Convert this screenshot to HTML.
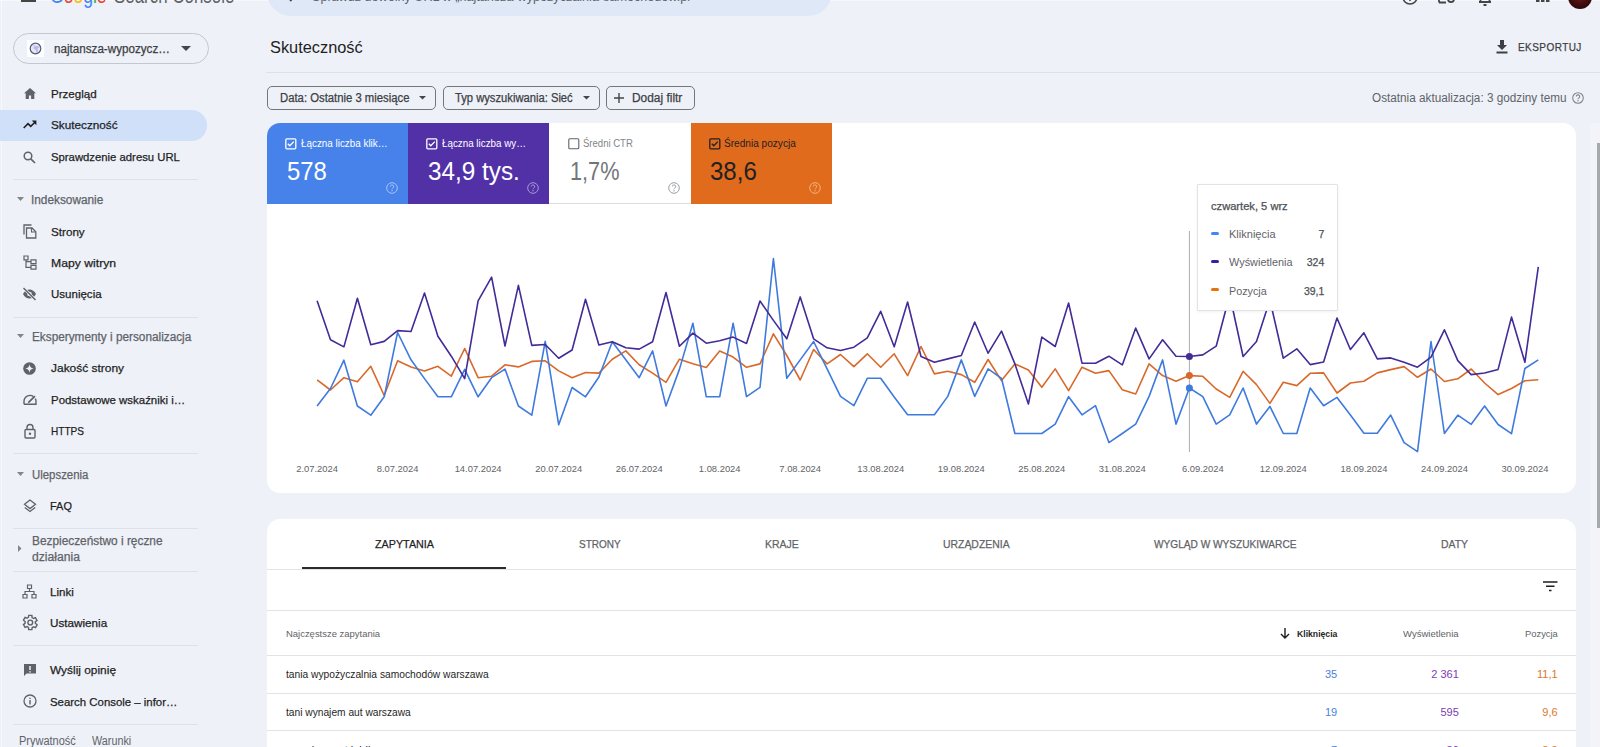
<!DOCTYPE html>
<html><head><meta charset="utf-8">
<style>
html,body{margin:0;padding:0;}
body{width:1600px;height:747px;overflow:hidden;position:relative;background:#eef1f8;font-family:"Liberation Sans",sans-serif;}
.abs{position:absolute;}
.tx{font-family:"Liberation Sans",sans-serif;}
.div{position:absolute;height:1px;background:#dde1e8;}
svg{position:absolute;overflow:visible;}
</style></head><body>
<!-- top bar -->
<div class="abs" style="left:0;top:0;width:1600px;height:1px;background:#f7f8fb"></div>
<div class="abs" style="left:1px;top:0;width:1px;height:747px;background:#f8f9fc"></div>
<div class="abs" style="left:21px;top:-6px;width:15px;height:6px;border-bottom:2px solid #444746;"></div>
<div class="abs" style="left:267px;top:-32px;width:565px;height:47.5px;border-radius:24px;background:#dfe8f7"></div>
<svg style="left:284px;top:-10px" width="14" height="14" viewBox="0 0 14 14"><path d="M11 7H3.5M7.5 3L3.5 7L7.5 11" stroke="#444746" stroke-width="1.8" fill="none"/></svg>
<svg style="left:1402px;top:-11px" width="16" height="16" viewBox="0 0 16 16"><circle cx="8" cy="8" r="7" stroke="#444746" stroke-width="1.6" fill="none"/><path d="M8 10.5v1.5" stroke="#444746" stroke-width="1.6"/></svg>
<svg style="left:1438px;top:-12px" width="18" height="16" viewBox="0 0 18 16"><path d="M1 14.5h7M1 8v6.5" stroke="#444746" stroke-width="1.8" fill="none"/><circle cx="13" cy="11" r="3" stroke="#444746" stroke-width="1.8" fill="none"/></svg>
<svg style="left:1478px;top:-11.3px" width="14" height="18" viewBox="0 0 14 18"><path d="M1 13h12M2.5 13V7a4.5 4.5 0 0 1 9 0v6" stroke="#444746" stroke-width="1.8" fill="none"/><rect x="5.5" y="15" width="3" height="2" fill="#444746"/></svg>
<svg style="left:1536px;top:-12px" width="14" height="15" viewBox="0 0 14 15"><g fill="#444746"><rect x="0" y="0" width="3.5" height="3.5"/><rect x="5" y="0" width="3.5" height="3.5"/><rect x="10" y="0" width="3.5" height="3.5"/><rect x="0" y="5" width="3.5" height="3.5"/><rect x="5" y="5" width="3.5" height="3.5"/><rect x="10" y="5" width="3.5" height="3.5"/><rect x="0" y="10.5" width="3.5" height="3.5"/><rect x="5" y="10.5" width="3.5" height="3.5"/><rect x="10" y="10.5" width="3.5" height="3.5"/></g></svg>
<div class="abs" style="left:1568px;top:-15px;width:24px;height:24px;border-radius:50%;background:radial-gradient(circle at 50% 40%,#7a1a1a 0,#3a0b0b 60%,#1a0606 100%)"></div>

<!-- sidebar -->
<div class="abs" style="left:13px;top:33px;width:194px;height:29px;border:1px solid #c4c7cc;border-radius:16px;"></div>
<div class="abs" style="left:27px;top:40px;width:17px;height:17px;background:#fff;"></div>
<svg style="left:29px;top:42px" width="13" height="13" viewBox="0 0 13 13"><circle cx="6.5" cy="6.5" r="5.4" fill="#e4e7f7"/><path d="M3.2 3.2C4.5 2.2 6 2.5 5.8 3.8S4 5 4.6 6.3 6.5 7 7 8.5 6.7 10.8 7.8 11.2C9 10 9.5 8.5 8.8 7.6S10.3 5.6 11 4.8" fill="#b9bde6"/><circle cx="6.5" cy="6.5" r="5.3" stroke="#565b78" stroke-width="1.2" fill="none"/></svg>
<svg style="left:181px;top:46px" width="10" height="6" viewBox="0 0 10 6"><path d="M0 0h10L5 5z" fill="#444746"/></svg>
<div class="abs" style="left:0;top:110px;width:207px;height:31px;border-radius:0 16px 16px 0;background:#d0e0f9"></div>
<!-- sidebar icons -->
<svg style="left:24px;top:88px" width="12" height="11" viewBox="0 0 12 11"><path d="M6 0L0 5.2h1.7V11h3.2V7.5h2.2V11h3.2V5.2H12z" fill="#5f6368"/></svg>
<svg style="left:23px;top:120px" width="14" height="9" viewBox="0 0 14 9"><path d="M0.7 8L5 3.7L7.7 6.4L12 2.2" stroke="#1f1f1f" stroke-width="1.6" fill="none"/><path d="M8.8 0.6h4.6v4.6z" fill="#1f1f1f"/></svg>
<svg style="left:23px;top:151px" width="13" height="13" viewBox="0 0 13 13"><circle cx="5" cy="5" r="3.8" stroke="#5f6368" stroke-width="1.5" fill="none"/><path d="M7.8 7.8L12 12" stroke="#5f6368" stroke-width="1.7"/></svg>
<div class="div" style="left:13px;top:179px;width:185px"></div>
<svg style="left:17px;top:197px" width="7" height="5" viewBox="0 0 7 5"><path d="M0 0h7L3.5 4z" fill="#80868b"/></svg>
<svg style="left:23px;top:224px" width="14" height="15" viewBox="0 0 14 15"><path d="M1 10.5V1h7.5" stroke="#5f6368" stroke-width="1.3" fill="none"/><path d="M3.5 4h5.5l3.8 3.8V14H3.5z" stroke="#5f6368" stroke-width="1.3" fill="none"/><path d="M8.5 4v4h4" stroke="#5f6368" stroke-width="1.1" fill="none"/></svg>
<svg style="left:23px;top:255px" width="14" height="15" viewBox="0 0 14 15"><path d="M1 1h4v3.8H1zM8 4.8h5v3.8H8zM8 10.4h5v3.8H8zM3 4.8v7.5h5M3 6.7h5" stroke="#5f6368" stroke-width="1.2" fill="none"/></svg>
<svg style="left:22px;top:287px" width="15" height="14" viewBox="0 0 15 14"><path d="M1 7C2.5 4 5 2.5 7.5 2.5S12.5 4 14 7C12.5 10 10 11.5 7.5 11.5S2.5 10 1 7z" fill="#5f6368"/><circle cx="7.5" cy="7" r="2.3" fill="#eef1f8"/><path d="M1.5 1l12 12" stroke="#eef1f8" stroke-width="2.6"/><path d="M1.5 1l12 12" stroke="#5f6368" stroke-width="1.4"/></svg>
<div class="div" style="left:13px;top:317px;width:185px"></div>
<svg style="left:17px;top:334px" width="7" height="5" viewBox="0 0 7 5"><path d="M0 0h7L3.5 4z" fill="#80868b"/></svg>
<svg style="left:23px;top:362px" width="13" height="13" viewBox="0 0 13 13"><circle cx="6.5" cy="6.5" r="6.3" fill="#5f6368"/><path d="M6.5 2.3C6.9 5 8 6.1 10.7 6.5C8 6.9 6.9 8 6.5 10.7C6.1 8 5 6.9 2.3 6.5C5 6.1 6.1 5 6.5 2.3z" fill="#eef1f8"/></svg>
<svg style="left:23px;top:394px" width="14" height="11" viewBox="0 0 14 11"><path d="M1 10.2V7.5A6 6 0 0 1 10.5 2.6M12.3 4.6A6 6 0 0 1 13 7.5V10.2H1" stroke="#5f6368" stroke-width="1.4" fill="none"/><path d="M5.8 8.2L11.5 2.6" stroke="#5f6368" stroke-width="1.7" stroke-linecap="round"/></svg>
<svg style="left:24px;top:423px" width="12" height="16" viewBox="0 0 12 16"><rect x="1" y="6.5" width="10" height="8.5" rx="1" stroke="#5f6368" stroke-width="1.4" fill="none"/><path d="M3 6.5V4.5a3 3 0 0 1 6 0v2" stroke="#5f6368" stroke-width="1.4" fill="none"/><circle cx="6" cy="10.8" r="1.2" fill="#5f6368"/></svg>
<div class="div" style="left:13px;top:453px;width:185px"></div>
<svg style="left:17px;top:472px" width="7" height="5" viewBox="0 0 7 5"><path d="M0 0h7L3.5 4z" fill="#80868b"/></svg>
<svg style="left:23px;top:499px" width="14" height="14" viewBox="0 0 14 14"><path d="M7 1L1.5 5.3L7 9.6L12.5 5.3z" stroke="#5f6368" stroke-width="1.3" fill="none"/><path d="M1.8 8.5L7 12.5L12.2 8.5" stroke="#5f6368" stroke-width="1.3" fill="none"/></svg>
<div class="div" style="left:13px;top:528px;width:185px"></div>
<svg style="left:18px;top:545px" width="4" height="7" viewBox="0 0 4 7"><path d="M0 0v7L3.5 3.5z" fill="#80868b"/></svg>
<div class="div" style="left:13px;top:571px;width:185px"></div>
<svg style="left:22px;top:584px" width="15" height="15" viewBox="0 0 15 15"><path d="M5.5 1h4v3.5h-4zM1 10.5h4v3.5H1zM10 10.5h4v3.5h-4zM7.5 4.5v3M3 10.5V7.5h9v3" stroke="#5f6368" stroke-width="1.2" fill="none"/></svg>
<svg style="left:20px;top:613px" width="19" height="19" viewBox="0 0 24 24"><path d="M19.4 13a7.5 7.5 0 0 0 0-2l2.1-1.6-2-3.5-2.5 1a7.3 7.3 0 0 0-1.7-1L15 3h-4l-.4 2.6a7.3 7.3 0 0 0-1.7 1l-2.5-1-2 3.5L6.5 11a7.5 7.5 0 0 0 0 2l-2.1 1.6 2 3.5 2.5-1c.5.4 1.1.8 1.7 1L11 21h4l.4-2.6c.6-.3 1.2-.6 1.7-1l2.5 1 2-3.5z" stroke="#5f6368" stroke-width="1.8" fill="none"/><circle cx="13" cy="12" r="3" stroke="#5f6368" stroke-width="1.8" fill="none"/></svg>
<div class="div" style="left:13px;top:645px;width:185px"></div>
<svg style="left:23px;top:663px" width="14" height="14" viewBox="0 0 14 14"><path d="M1 1h12v9.5H3.5L1 13z" fill="#5f6368"/><path d="M7 3v4M7 8.2v1.3" stroke="#eef1f8" stroke-width="1.5"/></svg>
<svg style="left:23px;top:694px" width="14" height="14" viewBox="0 0 14 14"><circle cx="7" cy="7" r="6" stroke="#5f6368" stroke-width="1.3" fill="none"/><path d="M7 6v4.5M7 3.8v1.2" stroke="#5f6368" stroke-width="1.4"/></svg>
<div class="div" style="left:13px;top:724px;width:185px"></div>

<!-- main header -->
<div class="div" style="left:266px;top:72px;width:1334px"></div>
<svg style="left:1496px;top:40px" width="12" height="14" viewBox="0 0 12 14"><path d="M4 0h4v5h3L6 10L1 5h3z" fill="#3c4043"/><rect x="0.5" y="11.5" width="11" height="2" fill="#3c4043"/></svg>
<!-- chips -->
<div class="abs" style="left:267px;top:86px;width:167px;height:22px;border:1px solid #747775;border-radius:5px"></div>
<svg style="left:419px;top:96px" width="7" height="4" viewBox="0 0 7 4"><path d="M0 0h7L3.5 3.5z" fill="#444746"/></svg>
<div class="abs" style="left:443px;top:86px;width:155px;height:22px;border:1px solid #747775;border-radius:5px"></div>
<svg style="left:583px;top:96px" width="7" height="4" viewBox="0 0 7 4"><path d="M0 0h7L3.5 3.5z" fill="#444746"/></svg>
<div class="abs" style="left:606px;top:86px;width:87px;height:22px;border:1px solid #747775;border-radius:5px"></div>
<svg style="left:614px;top:93px" width="10" height="10" viewBox="0 0 10 10"><path d="M5 0v10M0 5h10" stroke="#444746" stroke-width="1.4"/></svg>
<svg style="left:1572px;top:92px" width="12" height="12" viewBox="0 0 12 12"><circle cx="6" cy="6" r="5.3" stroke="#80868b" stroke-width="1.1" fill="none"/><path d="M4.3 4.6a1.7 1.7 0 1 1 2.4 1.5c-.5.3-.7.6-.7 1.2" stroke="#80868b" stroke-width="1.1" fill="none"/><circle cx="6" cy="8.8" r=".7" fill="#80868b"/></svg>

<!-- chart card -->
<div class="abs" style="left:267px;top:123px;width:1309px;height:370px;background:#fff;border-radius:13px"></div>
<div class="abs" style="left:267px;top:123px;width:141.2px;height:81px;background:#4682ea;border-radius:13px 0 0 0"></div>
<div class="abs" style="left:408.2px;top:123px;width:141.2px;height:81px;background:#5231a7"></div>
<div class="abs" style="left:549.4px;top:123px;width:141.2px;height:80px;background:#fff;border-bottom:1px solid #dadce0"></div>
<div class="abs" style="left:690.6px;top:123px;width:141.2px;height:81px;background:#e06b1c"></div>
<!-- checkboxes -->
<svg style="left:285px;top:138px" width="12" height="12" viewBox="0 0 12 12"><rect x="0.8" y="0.8" width="10" height="10" rx="1" stroke="#fff" stroke-width="1.3" fill="none"/><path d="M2.8 5.8l2 2 4-4.2" stroke="#fff" stroke-width="1.3" fill="none"/></svg>
<svg style="left:426px;top:138px" width="12" height="12" viewBox="0 0 12 12"><rect x="0.8" y="0.8" width="10" height="10" rx="1" stroke="#fff" stroke-width="1.3" fill="none"/><path d="M2.8 5.8l2 2 4-4.2" stroke="#fff" stroke-width="1.3" fill="none"/></svg>
<svg style="left:568px;top:138px" width="12" height="12" viewBox="0 0 12 12"><rect x="0.8" y="0.8" width="10" height="10" rx="1" stroke="#5f6368" stroke-width="1.1" fill="none"/></svg>
<svg style="left:709px;top:138px" width="12" height="12" viewBox="0 0 12 12"><rect x="0.8" y="0.8" width="10" height="10" rx="1" stroke="#202124" stroke-width="1.3" fill="none"/><path d="M2.8 5.8l2 2 4-4.2" stroke="#202124" stroke-width="1.3" fill="none"/></svg>
<!-- help icons in tiles -->
<svg style="left:386px;top:182px" width="12" height="12" viewBox="0 0 12 12"><g stroke="#a8c4f8" stroke-width="1" fill="none"><circle cx="6" cy="6" r="5.3"/><path d="M4.3 4.6a1.7 1.7 0 1 1 2.4 1.5c-.5.3-.7.6-.7 1.2"/></g><circle cx="6" cy="8.8" r=".7" fill="#a8c4f8"/></svg>
<svg style="left:527px;top:182px" width="12" height="12" viewBox="0 0 12 12"><g stroke="#a898d4" stroke-width="1" fill="none"><circle cx="6" cy="6" r="5.3"/><path d="M4.3 4.6a1.7 1.7 0 1 1 2.4 1.5c-.5.3-.7.6-.7 1.2"/></g><circle cx="6" cy="8.8" r=".7" fill="#a898d4"/></svg>
<svg style="left:668px;top:182px" width="12" height="12" viewBox="0 0 12 12"><g stroke="#9aa0a6" stroke-width="1" fill="none"><circle cx="6" cy="6" r="5.3"/><path d="M4.3 4.6a1.7 1.7 0 1 1 2.4 1.5c-.5.3-.7.6-.7 1.2"/></g><circle cx="6" cy="8.8" r=".7" fill="#9aa0a6"/></svg>
<svg style="left:809px;top:182px" width="12" height="12" viewBox="0 0 12 12"><g stroke="#f5b47a" stroke-width="1" fill="none"><circle cx="6" cy="6" r="5.3"/><path d="M4.3 4.6a1.7 1.7 0 1 1 2.4 1.5c-.5.3-.7.6-.7 1.2"/></g><circle cx="6" cy="8.8" r=".7" fill="#f5b47a"/></svg>
<!-- chart lines -->
<svg style="left:0;top:0" width="1600" height="747" viewBox="0 0 1600 747">
<line x1="1189.4" y1="231" x2="1189.4" y2="452" stroke="#a9adb2" stroke-width="1"/>
<polyline points="317.1,379.8 330.5,390.0 343.9,377.7 357.4,381.7 370.8,366.3 384.2,395.5 397.6,360.8 411.0,366.9 424.5,370.9 437.9,366.3 451.3,376.2 464.7,348.5 478.1,377.7 491.6,376.2 505.0,364.8 518.4,366.9 531.8,361.4 545.2,360.8 558.7,370.9 572.1,377.7 585.5,372.5 598.9,373.1 612.3,359.2 625.8,350.9 639.2,364.8 652.6,373.1 666.0,382.3 679.4,359.2 692.9,363.8 706.3,367.5 719.7,350.9 733.1,357.1 746.5,367.3 760.0,363.9 773.4,333.8 786.8,355.5 800.2,380.0 813.6,349.5 827.1,363.9 840.5,354.5 853.9,366.6 867.3,353.8 880.7,367.2 894.2,353.8 907.6,375.6 921.0,346.5 934.4,373.9 947.8,371.3 961.3,374.6 974.7,382.3 988.1,359.5 1001.5,380.6 1014.9,363.9 1028.4,369.9 1041.8,387.3 1055.2,368.9 1068.6,390.7 1082.0,367.2 1095.5,373.3 1108.9,370.6 1122.3,389.7 1135.7,394.0 1149.1,363.9 1162.6,375.6 1176.0,381.3 1189.4,375.6 1202.8,376.3 1216.2,389.0 1229.7,397.4 1243.1,371.3 1256.5,384.6 1269.9,403.4 1283.3,382.3 1296.8,385.6 1310.2,373.3 1323.6,372.9 1337.0,393.0 1350.4,383.0 1363.9,381.3 1377.3,372.9 1390.7,369.6 1404.1,366.6 1417.5,377.3 1431.0,369.0 1444.4,381.5 1457.8,378.8 1471.2,369.0 1484.6,383.0 1498.1,394.6 1511.5,388.5 1524.9,380.8 1538.3,379.8" fill="none" stroke="#d8692a" stroke-width="1.6" stroke-linejoin="round"/>
<polyline points="317.1,406.0 330.5,388.5 343.9,360.2 357.4,406.0 370.8,415.2 384.2,396.8 397.6,332.5 411.0,359.8 424.5,378.6 437.9,396.8 451.3,396.8 464.7,369.4 478.1,396.8 491.6,377.7 505.0,369.1 518.4,406.0 531.8,415.2 545.2,341.4 558.7,424.8 572.1,387.5 585.5,396.8 598.9,377.0 612.3,341.7 625.8,359.8 639.2,377.7 652.6,350.9 666.0,406.0 679.4,369.4 692.9,323.2 706.3,396.8 719.7,396.8 733.1,323.2 746.5,396.6 760.0,387.3 773.4,258.5 786.8,378.3 800.2,359.9 813.6,341.5 827.1,368.9 840.5,396.4 853.9,405.7 867.3,378.3 880.7,378.3 894.2,397.0 907.6,414.8 921.0,414.8 934.4,414.8 947.8,396.4 961.3,359.9 974.7,396.4 988.1,368.9 1001.5,378.3 1014.9,433.5 1028.4,433.5 1041.8,433.5 1055.2,424.1 1068.6,396.7 1082.0,414.8 1095.5,405.7 1108.9,442.6 1122.3,433.5 1135.7,424.1 1149.1,396.4 1162.6,359.9 1176.0,424.1 1189.4,388.0 1202.8,396.7 1216.2,424.1 1229.7,414.8 1243.1,388.0 1256.5,424.1 1269.9,406.4 1283.3,433.5 1296.8,433.5 1310.2,388.0 1323.6,405.7 1337.0,397.4 1350.4,415.1 1363.9,433.2 1377.3,433.2 1390.7,415.1 1404.1,442.6 1417.5,451.6 1431.0,341.5 1444.4,433.5 1457.8,415.2 1471.2,424.3 1484.6,406.0 1498.1,424.5 1511.5,433.7 1524.9,368.5 1538.3,359.8" fill="none" stroke="#3f7ade" stroke-width="1.6" stroke-linejoin="round"/>
<polyline points="317.1,300.8 330.5,339.8 343.9,346.9 357.4,298.3 370.8,344.8 384.2,341.4 397.6,330.6 411.0,331.5 424.5,293.1 437.9,336.2 451.3,356.2 464.7,378.6 478.1,300.8 491.6,277.1 505.0,346.0 518.4,285.4 531.8,345.4 545.2,344.5 558.7,358.3 572.1,350.0 585.5,299.2 598.9,345.0 612.3,341.7 625.8,347.8 639.2,349.1 652.6,341.7 666.0,292.5 679.4,346.3 692.9,333.1 706.3,343.2 719.7,340.8 733.1,337.1 746.5,343.5 760.0,301.0 773.4,320.4 786.8,338.8 800.2,296.9 813.6,338.8 827.1,347.8 840.5,350.5 853.9,347.2 867.3,337.8 880.7,311.3 894.2,346.8 907.6,302.0 921.0,356.5 934.4,362.2 947.8,358.9 961.3,355.5 974.7,322.0 988.1,353.2 1001.5,331.1 1014.9,363.9 1028.4,404.0 1041.8,337.1 1055.2,346.5 1068.6,303.0 1082.0,363.2 1095.5,363.2 1108.9,356.2 1122.3,364.9 1135.7,328.1 1149.1,358.9 1162.6,339.8 1176.0,356.2 1189.4,356.5 1202.8,354.9 1216.2,346.2 1229.7,295.0 1243.1,356.5 1256.5,341.5 1269.9,300.0 1283.3,358.2 1296.8,348.8 1310.2,364.6 1323.6,362.0 1337.0,318.0 1350.4,349.5 1363.9,332.8 1377.3,358.9 1390.7,357.9 1404.1,362.2 1417.5,367.2 1431.0,357.2 1444.4,329.8 1457.8,360.6 1471.2,374.6 1484.6,373.0 1498.1,369.4 1511.5,317.1 1524.9,362.3 1538.3,266.9" fill="none" stroke="#432b98" stroke-width="1.6" stroke-linejoin="round"/>
<circle cx="1189.4" cy="356.5" r="3.5" fill="#432b98"/>
<circle cx="1189.4" cy="375.6" r="3.5" fill="#d8692a"/>
<circle cx="1189.4" cy="388" r="3.5" fill="#3f7ade"/>
</svg>
<!-- tooltip -->
<div class="abs" style="left:1197px;top:184px;width:139px;height:125px;background:#fff;border:1px solid #e2e3e5;border-radius:1px;box-shadow:0 1px 3px rgba(0,0,0,0.06)"></div>
<div class="abs" style="left:1211px;top:232px;width:8px;height:3px;border-radius:1.5px;background:#4285f4"></div>
<div class="abs" style="left:1211px;top:260px;width:8px;height:3px;border-radius:1.5px;background:#3c1f9c"></div>
<div class="abs" style="left:1211px;top:288px;width:8px;height:3px;border-radius:1.5px;background:#e8710a"></div>

<!-- table card -->
<div class="abs" style="left:267px;top:519px;width:1309px;height:260px;background:#fff;border-radius:13px"></div>
<div class="abs" style="left:302px;top:567px;width:204px;height:2px;background:#2a2b2e"></div>
<div class="div" style="left:267px;top:569px;width:1309px;background:#e3e3e3"></div>
<svg style="left:1543px;top:581px" width="15" height="11" viewBox="0 0 15 11"><path d="M0 1h14.5M3 5.2h8.5M6 9.5h2.5" stroke="#1f1f1f" stroke-width="1.6"/></svg>
<div class="div" style="left:267px;top:610px;width:1309px;background:#e3e3e3"></div>
<svg style="left:1280px;top:628px" width="10" height="11" viewBox="0 0 10 11"><path d="M5 0v10M1 6l4 4 4-4" stroke="#1f1f1f" stroke-width="1.4" fill="none"/></svg>
<div class="div" style="left:267px;top:655px;width:1309px;background:#e3e3e3"></div>
<div class="div" style="left:267px;top:693px;width:1309px;background:#e3e3e3"></div>
<div class="div" style="left:267px;top:730px;width:1309px;background:#e3e3e3"></div>
<!-- scrollbar -->
<div class="abs" style="left:1590px;top:123px;width:10px;height:624px;background:#f2f4f9"></div>
<div class="abs" style="left:1597px;top:143px;width:3px;height:385px;background:#a6a9ad"></div>
<div id="logo1" class="tx" style="position:absolute;top:-13.6px;height:20px;line-height:20px;font-size:22px;font-weight:400;color:#4285f4;white-space:nowrap;left:50.4px;transform-origin:0 50%;transform:scaleX(0.7970);"><span style="color:#4285f4">G</span><span style="color:#ea4335">o</span><span style="color:#fbbc04">o</span><span style="color:#4285f4">g</span><span style="color:#34a853">l</span><span style="color:#ea4335">e</span></div>
<div id="logo2" class="tx" style="position:absolute;top:-13.6px;height:20px;line-height:20px;font-size:22px;font-weight:400;color:#5f6368;white-space:nowrap;left:113.7px;transform-origin:0 50%;transform:scaleX(0.7685);">Search Console</div>
<div id="search" class="tx" style="position:absolute;top:-12.6px;height:20px;line-height:20px;font-size:13.5px;font-weight:400;color:#5f6368;white-space:nowrap;left:312.0px;transform-origin:0 50%;transform:scaleX(0.9341);">Sprawdź dowolny URL w „najtansza-wypozyczalnia-samochodow.pl</div>
<div id="s_prop" class="tx" style="position:absolute;top:39.0px;height:20px;line-height:20px;font-size:12px;font-weight:500;color:#3c4043;white-space:nowrap;-webkit-text-stroke:0.25px #3c4043;left:54.3px;transform-origin:0 50%;transform:scaleX(0.9708);">najtansza-wypozycz…</div>
<div id="s1" class="tx" style="position:absolute;top:84.0px;height:20px;line-height:20px;font-size:11.5px;font-weight:500;color:#1f1f1f;white-space:nowrap;-webkit-text-stroke:0.25px #1f1f1f;left:50.6px;transform-origin:0 50%;transform:scaleX(1.0068);">Przegląd</div>
<div id="s2" class="tx" style="position:absolute;top:115.3px;height:20px;line-height:20px;font-size:11.5px;font-weight:500;color:#1f1f1f;white-space:nowrap;-webkit-text-stroke:0.25px #1f1f1f;left:50.6px;transform-origin:0 50%;transform:scaleX(1.0214);">Skuteczność</div>
<div id="s3" class="tx" style="position:absolute;top:147.3px;height:20px;line-height:20px;font-size:11.5px;font-weight:500;color:#1f1f1f;white-space:nowrap;-webkit-text-stroke:0.25px #1f1f1f;left:50.6px;transform-origin:0 50%;transform:scaleX(0.9836);">Sprawdzenie adresu URL</div>
<div id="s5" class="tx" style="position:absolute;top:221.6px;height:20px;line-height:20px;font-size:11.5px;font-weight:500;color:#1f1f1f;white-space:nowrap;-webkit-text-stroke:0.25px #1f1f1f;left:50.6px;transform-origin:0 50%;transform:scaleX(1.0135);">Strony</div>
<div id="s6" class="tx" style="position:absolute;top:252.9px;height:20px;line-height:20px;font-size:11.5px;font-weight:500;color:#1f1f1f;white-space:nowrap;-webkit-text-stroke:0.25px #1f1f1f;left:50.6px;transform-origin:0 50%;transform:scaleX(1.0610);">Mapy witryn</div>
<div id="s7" class="tx" style="position:absolute;top:284.2px;height:20px;line-height:20px;font-size:11.5px;font-weight:500;color:#1f1f1f;white-space:nowrap;-webkit-text-stroke:0.25px #1f1f1f;left:50.6px;transform-origin:0 50%;transform:scaleX(1.0020);">Usunięcia</div>
<div id="s9" class="tx" style="position:absolute;top:358.2px;height:20px;line-height:20px;font-size:11.5px;font-weight:500;color:#1f1f1f;white-space:nowrap;-webkit-text-stroke:0.25px #1f1f1f;left:50.6px;transform-origin:0 50%;transform:scaleX(1.0396);">Jakość strony</div>
<div id="s10" class="tx" style="position:absolute;top:390.0px;height:20px;line-height:20px;font-size:11.5px;font-weight:500;color:#1f1f1f;white-space:nowrap;-webkit-text-stroke:0.25px #1f1f1f;left:50.6px;transform-origin:0 50%;transform:scaleX(0.9951);">Podstawowe wskaźniki i…</div>
<div id="s11" class="tx" style="position:absolute;top:421.1px;height:20px;line-height:20px;font-size:11.5px;font-weight:500;color:#1f1f1f;white-space:nowrap;-webkit-text-stroke:0.25px #1f1f1f;left:50.6px;transform-origin:0 50%;transform:scaleX(0.8753);">HTTPS</div>
<div id="s13" class="tx" style="position:absolute;top:496.0px;height:20px;line-height:20px;font-size:11.5px;font-weight:500;color:#1f1f1f;white-space:nowrap;-webkit-text-stroke:0.25px #1f1f1f;left:50.3px;transform-origin:0 50%;transform:scaleX(0.9515);">FAQ</div>
<div id="s17" class="tx" style="position:absolute;top:581.7px;height:20px;line-height:20px;font-size:11.5px;font-weight:500;color:#1f1f1f;white-space:nowrap;-webkit-text-stroke:0.25px #1f1f1f;left:50.3px;transform-origin:0 50%;transform:scaleX(1.0061);">Linki</div>
<div id="s18" class="tx" style="position:absolute;top:613.1px;height:20px;line-height:20px;font-size:11.5px;font-weight:500;color:#1f1f1f;white-space:nowrap;-webkit-text-stroke:0.25px #1f1f1f;left:50.3px;transform-origin:0 50%;transform:scaleX(1.0169);">Ustawienia</div>
<div id="s19" class="tx" style="position:absolute;top:660.4px;height:20px;line-height:20px;font-size:11.5px;font-weight:500;color:#1f1f1f;white-space:nowrap;-webkit-text-stroke:0.25px #1f1f1f;left:50.3px;transform-origin:0 50%;transform:scaleX(1.0343);">Wyślij opinię</div>
<div id="s20" class="tx" style="position:absolute;top:691.8px;height:20px;line-height:20px;font-size:11.5px;font-weight:500;color:#1f1f1f;white-space:nowrap;-webkit-text-stroke:0.25px #1f1f1f;left:50.3px;transform-origin:0 50%;transform:scaleX(0.9916);">Search Console – infor…</div>
<div id="s4" class="tx" style="position:absolute;top:190.0px;height:20px;line-height:20px;font-size:12px;font-weight:500;color:#5f6368;white-space:nowrap;-webkit-text-stroke:0.25px #5f6368;left:31.3px;transform-origin:0 50%;transform:scaleX(0.9851);">Indeksowanie</div>
<div id="s8" class="tx" style="position:absolute;top:326.7px;height:20px;line-height:20px;font-size:12px;font-weight:500;color:#5f6368;white-space:nowrap;-webkit-text-stroke:0.25px #5f6368;left:31.9px;transform-origin:0 50%;transform:scaleX(0.9829);">Eksperymenty i personalizacja</div>
<div id="s12" class="tx" style="position:absolute;top:464.6px;height:20px;line-height:20px;font-size:12px;font-weight:500;color:#5f6368;white-space:nowrap;-webkit-text-stroke:0.25px #5f6368;left:31.9px;transform-origin:0 50%;transform:scaleX(0.9499);">Ulepszenia</div>
<div id="s15" class="tx" style="position:absolute;top:531.4px;height:20px;line-height:20px;font-size:12px;font-weight:500;color:#5f6368;white-space:nowrap;-webkit-text-stroke:0.25px #5f6368;left:31.9px;transform-origin:0 50%;transform:scaleX(0.9881);">Bezpieczeństwo i ręczne</div>
<div id="s16" class="tx" style="position:absolute;top:546.7px;height:20px;line-height:20px;font-size:12px;font-weight:500;color:#5f6368;white-space:nowrap;-webkit-text-stroke:0.25px #5f6368;left:31.9px;transform-origin:0 50%;transform:scaleX(1.0111);">działania</div>
<div id="s21" class="tx" style="position:absolute;top:731.4px;height:20px;line-height:20px;font-size:12px;font-weight:400;color:#5f6368;white-space:nowrap;left:19.2px;transform-origin:0 50%;transform:scaleX(0.9157);">Prywatność</div>
<div id="s22" class="tx" style="position:absolute;top:731.4px;height:20px;line-height:20px;font-size:12px;font-weight:400;color:#5f6368;white-space:nowrap;left:92.1px;transform-origin:0 50%;transform:scaleX(0.8995);">Warunki</div>
<div id="m_title" class="tx" style="position:absolute;top:38.1px;height:20px;line-height:20px;font-size:16px;font-weight:400;color:#1f1f1f;white-space:nowrap;left:270.0px;transform-origin:0 50%;transform:scaleX(1.0218);">Skuteczność</div>
<div id="m_exp" class="tx" style="position:absolute;top:36.9px;height:20px;line-height:20px;font-size:11.5px;font-weight:500;color:#3c4043;white-space:nowrap;letter-spacing:0.5px;-webkit-text-stroke:0.25px #3c4043;left:1517.7px;transform-origin:0 50%;transform:scaleX(0.8702);">EKSPORTUJ</div>
<div id="c1" class="tx" style="position:absolute;top:88.0px;height:20px;line-height:20px;font-size:12px;font-weight:500;color:#3c4043;white-space:nowrap;-webkit-text-stroke:0.25px #3c4043;left:279.6px;transform-origin:0 50%;transform:scaleX(0.9425);">Data: Ostatnie 3 miesiące</div>
<div id="c2" class="tx" style="position:absolute;top:88.0px;height:20px;line-height:20px;font-size:12px;font-weight:500;color:#3c4043;white-space:nowrap;-webkit-text-stroke:0.25px #3c4043;left:455.0px;transform-origin:0 50%;transform:scaleX(0.9338);">Typ wyszukiwania: Sieć</div>
<div id="c3" class="tx" style="position:absolute;top:88.0px;height:20px;line-height:20px;font-size:12px;font-weight:500;color:#3c4043;white-space:nowrap;-webkit-text-stroke:0.25px #3c4043;left:632.2px;transform-origin:0 50%;transform:scaleX(0.9924);">Dodaj filtr</div>
<div id="upd" class="tx" style="position:absolute;top:88.0px;height:20px;line-height:20px;font-size:12px;font-weight:400;color:#5f6368;white-space:nowrap;left:1372.4px;transform-origin:0 50%;transform:scaleX(0.9790);">Ostatnia aktualizacja: 3 godziny temu</div>
<div id="tl1" class="tx" style="position:absolute;top:133.5px;height:20px;line-height:20px;font-size:10px;font-weight:400;color:#ffffff;white-space:nowrap;left:300.6px;transform-origin:0 50%;transform:scaleX(0.9862);">Łączna liczba klik…</div>
<div id="tl2" class="tx" style="position:absolute;top:133.5px;height:20px;line-height:20px;font-size:10px;font-weight:400;color:#ffffff;white-space:nowrap;left:441.9px;transform-origin:0 50%;transform:scaleX(0.9814);">Łączna liczba wy…</div>
<div id="tl3" class="tx" style="position:absolute;top:133.5px;height:20px;line-height:20px;font-size:10px;font-weight:400;color:#80868b;white-space:nowrap;left:583.2px;transform-origin:0 50%;transform:scaleX(0.9531);">Średni CTR</div>
<div id="tl4" class="tx" style="position:absolute;top:133.5px;height:20px;line-height:20px;font-size:10px;font-weight:400;color:#202124;white-space:nowrap;left:724.0px;transform-origin:0 50%;transform:scaleX(1.0090);">Średnia pozycja</div>
<div id="tv1" class="tx" style="position:absolute;top:160.6px;height:20px;line-height:20px;font-size:25px;font-weight:400;color:#ffffff;white-space:nowrap;left:287.0px;transform-origin:0 50%;transform:scaleX(0.9564);">578</div>
<div id="tv2" class="tx" style="position:absolute;top:160.6px;height:20px;line-height:20px;font-size:25px;font-weight:400;color:#ffffff;white-space:nowrap;left:427.5px;transform-origin:0 50%;transform:scaleX(0.9714);">34,9 tys.</div>
<div id="tv3" class="tx" style="position:absolute;top:160.6px;height:20px;line-height:20px;font-size:25px;font-weight:400;color:#70757a;white-space:nowrap;left:569.6px;transform-origin:0 50%;transform:scaleX(0.8669);">1,7%</div>
<div id="tv4" class="tx" style="position:absolute;top:160.6px;height:20px;line-height:20px;font-size:25px;font-weight:400;color:#202124;white-space:nowrap;left:709.6px;transform-origin:0 50%;transform:scaleX(0.9615);">38,6</div>
<div id="d0" class="tx" style="position:absolute;top:458.8px;height:20px;line-height:20px;font-size:9.4px;font-weight:400;color:#5f6368;white-space:nowrap;left:317.1px;transform:translateX(-50%);">2.07.2024</div>
<div id="d1" class="tx" style="position:absolute;top:458.8px;height:20px;line-height:20px;font-size:9.4px;font-weight:400;color:#5f6368;white-space:nowrap;left:397.6px;transform:translateX(-50%);">8.07.2024</div>
<div id="d2" class="tx" style="position:absolute;top:458.8px;height:20px;line-height:20px;font-size:9.4px;font-weight:400;color:#5f6368;white-space:nowrap;left:478.1px;transform:translateX(-50%);">14.07.2024</div>
<div id="d3" class="tx" style="position:absolute;top:458.8px;height:20px;line-height:20px;font-size:9.4px;font-weight:400;color:#5f6368;white-space:nowrap;left:558.7px;transform:translateX(-50%);">20.07.2024</div>
<div id="d4" class="tx" style="position:absolute;top:458.8px;height:20px;line-height:20px;font-size:9.4px;font-weight:400;color:#5f6368;white-space:nowrap;left:639.2px;transform:translateX(-50%);">26.07.2024</div>
<div id="d5" class="tx" style="position:absolute;top:458.8px;height:20px;line-height:20px;font-size:9.4px;font-weight:400;color:#5f6368;white-space:nowrap;left:719.7px;transform:translateX(-50%);">1.08.2024</div>
<div id="d6" class="tx" style="position:absolute;top:458.8px;height:20px;line-height:20px;font-size:9.4px;font-weight:400;color:#5f6368;white-space:nowrap;left:800.2px;transform:translateX(-50%);">7.08.2024</div>
<div id="d7" class="tx" style="position:absolute;top:458.8px;height:20px;line-height:20px;font-size:9.4px;font-weight:400;color:#5f6368;white-space:nowrap;left:880.7px;transform:translateX(-50%);">13.08.2024</div>
<div id="d8" class="tx" style="position:absolute;top:458.8px;height:20px;line-height:20px;font-size:9.4px;font-weight:400;color:#5f6368;white-space:nowrap;left:961.3px;transform:translateX(-50%);">19.08.2024</div>
<div id="d9" class="tx" style="position:absolute;top:458.8px;height:20px;line-height:20px;font-size:9.4px;font-weight:400;color:#5f6368;white-space:nowrap;left:1041.8px;transform:translateX(-50%);">25.08.2024</div>
<div id="d10" class="tx" style="position:absolute;top:458.8px;height:20px;line-height:20px;font-size:9.4px;font-weight:400;color:#5f6368;white-space:nowrap;left:1122.3px;transform:translateX(-50%);">31.08.2024</div>
<div id="d11" class="tx" style="position:absolute;top:458.8px;height:20px;line-height:20px;font-size:9.4px;font-weight:400;color:#5f6368;white-space:nowrap;left:1202.8px;transform:translateX(-50%);">6.09.2024</div>
<div id="d12" class="tx" style="position:absolute;top:458.8px;height:20px;line-height:20px;font-size:9.4px;font-weight:400;color:#5f6368;white-space:nowrap;left:1283.3px;transform:translateX(-50%);">12.09.2024</div>
<div id="d13" class="tx" style="position:absolute;top:458.8px;height:20px;line-height:20px;font-size:9.4px;font-weight:400;color:#5f6368;white-space:nowrap;left:1363.9px;transform:translateX(-50%);">18.09.2024</div>
<div id="d14" class="tx" style="position:absolute;top:458.8px;height:20px;line-height:20px;font-size:9.4px;font-weight:400;color:#5f6368;white-space:nowrap;left:1444.4px;transform:translateX(-50%);">24.09.2024</div>
<div id="d15" class="tx" style="position:absolute;top:458.8px;height:20px;line-height:20px;font-size:9.4px;font-weight:400;color:#5f6368;white-space:nowrap;left:1524.9px;transform:translateX(-50%);">30.09.2024</div>
<div id="tt_h" class="tx" style="position:absolute;top:196.1px;height:20px;line-height:20px;font-size:10.5px;font-weight:500;color:#4d5156;white-space:nowrap;-webkit-text-stroke:0.25px #4d5156;left:1211.2px;transform-origin:0 50%;transform:scaleX(1.0600);">czwartek, 5 wrz</div>
<div id="tt_l1" class="tx" style="position:absolute;top:223.9px;height:20px;line-height:20px;font-size:10.5px;font-weight:400;color:#5f6368;white-space:nowrap;left:1229.3px;transform-origin:0 50%;transform:scaleX(1.0505);">Kliknięcia</div>
<div id="tt_l2" class="tx" style="position:absolute;top:251.6px;height:20px;line-height:20px;font-size:10.5px;font-weight:400;color:#5f6368;white-space:nowrap;left:1229.3px;transform-origin:0 50%;transform:scaleX(1.0394);">Wyświetlenia</div>
<div id="tt_l3" class="tx" style="position:absolute;top:280.5px;height:20px;line-height:20px;font-size:10.5px;font-weight:400;color:#5f6368;white-space:nowrap;left:1229.3px;transform-origin:0 50%;transform:scaleX(1.0254);">Pozycja</div>
<div id="tt_v1" class="tx" style="position:absolute;top:223.9px;height:20px;line-height:20px;font-size:10.5px;font-weight:500;color:#4d5156;white-space:nowrap;-webkit-text-stroke:0.25px #4d5156;right:275.7px;transform-origin:100% 50%;">7</div>
<div id="tt_v2" class="tx" style="position:absolute;top:251.6px;height:20px;line-height:20px;font-size:10.5px;font-weight:500;color:#4d5156;white-space:nowrap;-webkit-text-stroke:0.25px #4d5156;right:275.7px;transform-origin:100% 50%;">324</div>
<div id="tt_v3" class="tx" style="position:absolute;top:280.5px;height:20px;line-height:20px;font-size:10.5px;font-weight:500;color:#4d5156;white-space:nowrap;-webkit-text-stroke:0.25px #4d5156;right:275.7px;transform-origin:100% 50%;">39,1</div>
<div id="tb1" class="tx" style="position:absolute;top:534.0px;height:20px;line-height:20px;font-size:11px;font-weight:500;color:#1f1f1f;white-space:nowrap;-webkit-text-stroke:0.25px #1f1f1f;left:374.8px;transform-origin:0 50%;transform:scaleX(0.9782);">ZAPYTANIA</div>
<div id="tb2" class="tx" style="position:absolute;top:534.0px;height:20px;line-height:20px;font-size:11px;font-weight:500;color:#5f6368;white-space:nowrap;-webkit-text-stroke:0.25px #5f6368;left:579.0px;transform-origin:0 50%;transform:scaleX(0.9074);">STRONY</div>
<div id="tb3" class="tx" style="position:absolute;top:534.0px;height:20px;line-height:20px;font-size:11px;font-weight:500;color:#5f6368;white-space:nowrap;-webkit-text-stroke:0.25px #5f6368;left:765.2px;transform-origin:0 50%;transform:scaleX(0.9530);">KRAJE</div>
<div id="tb4" class="tx" style="position:absolute;top:534.0px;height:20px;line-height:20px;font-size:11px;font-weight:500;color:#5f6368;white-space:nowrap;-webkit-text-stroke:0.25px #5f6368;left:943.0px;transform-origin:0 50%;transform:scaleX(0.9476);">URZĄDZENIA</div>
<div id="tb5" class="tx" style="position:absolute;top:534.0px;height:20px;line-height:20px;font-size:11px;font-weight:500;color:#5f6368;white-space:nowrap;-webkit-text-stroke:0.25px #5f6368;left:1154.0px;transform-origin:0 50%;transform:scaleX(0.9204);">WYGLĄD W WYSZUKIWARCE</div>
<div id="tb6" class="tx" style="position:absolute;top:534.0px;height:20px;line-height:20px;font-size:11px;font-weight:500;color:#5f6368;white-space:nowrap;-webkit-text-stroke:0.25px #5f6368;left:1441.4px;transform-origin:0 50%;transform:scaleX(0.9463);">DATY</div>
<div id="th0" class="tx" style="position:absolute;top:624.0px;height:20px;line-height:20px;font-size:9.5px;font-weight:400;color:#5f6368;white-space:nowrap;left:286.0px;transform-origin:0 50%;transform:scaleX(0.9944);">Najczęstsze zapytania</div>
<div id="th1" class="tx" style="position:absolute;top:624.0px;height:20px;line-height:20px;font-size:9.5px;font-weight:700;color:#1f1f1f;white-space:nowrap;left:1296.8px;transform-origin:0 50%;transform:scaleX(0.9107);">Kliknięcia</div>
<div id="th2" class="tx" style="position:absolute;top:624.0px;height:20px;line-height:20px;font-size:9.5px;font-weight:400;color:#5f6368;white-space:nowrap;left:1403.2px;transform-origin:0 50%;transform:scaleX(1.0043);">Wyświetlenia</div>
<div id="th3" class="tx" style="position:absolute;top:624.0px;height:20px;line-height:20px;font-size:9.5px;font-weight:400;color:#5f6368;white-space:nowrap;left:1524.8px;transform-origin:0 50%;transform:scaleX(0.9860);">Pozycja</div>
<div id="r1" class="tx" style="position:absolute;top:664.3px;height:20px;line-height:20px;font-size:11px;font-weight:400;color:#1f1f1f;white-space:nowrap;left:286.0px;transform-origin:0 50%;transform:scaleX(0.9308);">tania wypożyczalnia samochodów warszawa</div>
<div id="r2" class="tx" style="position:absolute;top:701.6px;height:20px;line-height:20px;font-size:11px;font-weight:400;color:#1f1f1f;white-space:nowrap;left:286.0px;transform-origin:0 50%;transform:scaleX(0.9278);">tani wynajem aut warszawa</div>
<div id="r3" class="tx" style="position:absolute;top:739.5px;height:20px;line-height:20px;font-size:11px;font-weight:400;color:#1f1f1f;white-space:nowrap;left:286.0px;transform-origin:0 50%;">wynajem aut lublin</div>
<div id="r1a" class="tx" style="position:absolute;top:664.3px;height:20px;line-height:20px;font-size:11px;font-weight:400;color:#4b7fdc;white-space:nowrap;right:262.8px;transform-origin:100% 50%;">35</div>
<div id="r1b" class="tx" style="position:absolute;top:664.3px;height:20px;line-height:20px;font-size:11px;font-weight:400;color:#7b3db4;white-space:nowrap;right:141.2px;transform-origin:100% 50%;">2 361</div>
<div id="r1c" class="tx" style="position:absolute;top:664.3px;height:20px;line-height:20px;font-size:11px;font-weight:400;color:#d9772b;white-space:nowrap;right:42.4px;transform-origin:100% 50%;">11,1</div>
<div id="r2a" class="tx" style="position:absolute;top:701.6px;height:20px;line-height:20px;font-size:11px;font-weight:400;color:#4b7fdc;white-space:nowrap;right:262.8px;transform-origin:100% 50%;">19</div>
<div id="r2b" class="tx" style="position:absolute;top:701.6px;height:20px;line-height:20px;font-size:11px;font-weight:400;color:#7b3db4;white-space:nowrap;right:141.2px;transform-origin:100% 50%;">595</div>
<div id="r2c" class="tx" style="position:absolute;top:701.6px;height:20px;line-height:20px;font-size:11px;font-weight:400;color:#d9772b;white-space:nowrap;right:42.4px;transform-origin:100% 50%;">9,6</div>
<div id="r3a" class="tx" style="position:absolute;top:739.5px;height:20px;line-height:20px;font-size:11px;font-weight:400;color:#4b7fdc;white-space:nowrap;right:262.8px;transform-origin:100% 50%;">7</div>
<div id="r3b" class="tx" style="position:absolute;top:739.5px;height:20px;line-height:20px;font-size:11px;font-weight:400;color:#7b3db4;white-space:nowrap;right:141.2px;transform-origin:100% 50%;">89</div>
<div id="r3c" class="tx" style="position:absolute;top:739.5px;height:20px;line-height:20px;font-size:11px;font-weight:400;color:#d9772b;white-space:nowrap;right:42.4px;transform-origin:100% 50%;">8,3</div>
</body></html>
